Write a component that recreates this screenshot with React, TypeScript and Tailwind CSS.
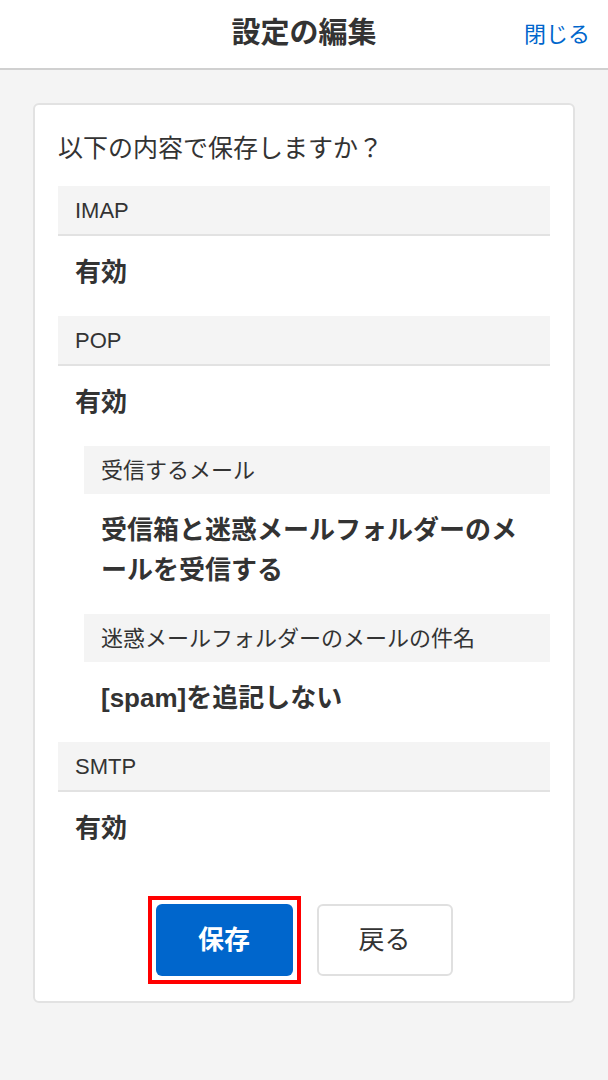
import React from "react";

const font = { fontFamily: '"Liberation Sans", "Noto Sans CJK JP", sans-serif' };

const SectionHeader = ({ label }: { label: string }) => (
  <div className="flex h-[50px] items-center border-b-2 border-[#e2e2e2] bg-[#f4f4f4] pl-[17px] text-[22px] text-[#333]">
    {label}
  </div>
);

const SubHeader = ({ label }: { label: string }) => (
  <div className="flex h-[48px] items-center bg-[#f4f4f4] pl-[17px] text-[22px] text-[#333]">
    {label}
  </div>
);

const Value = ({ children }: { children: React.ReactNode }) => (
  <div className="pb-6 pl-[17px] pr-[17px] pt-4 text-[26px] font-bold leading-[40px] text-[#333]">
    {children}
  </div>
);

export default function App() {
  return (
    <div className="min-h-[1080px] bg-[#f4f4f4]" style={font}>
      <header className="relative flex h-[70px] items-center justify-center border-b-2 border-[#d0d0d0] bg-white">
        <h1 className="text-[29px] font-bold text-[#333]">設定の編集</h1>
        <button className="absolute right-[18px] top-1/2 -translate-y-1/2 text-[22px] text-[#0066cc]">
          閉じる
        </button>
      </header>

      <main className="px-[33px] pt-[33px]">
        <div className="rounded-md border-2 border-[#e2e2e2] bg-white px-[23px] pb-[25px] pt-[25px]">
          <p className="mb-5 text-[25px] leading-[36px] text-[#333]">以下の内容で保存しますか？</p>

          <SectionHeader label="IMAP" />
          <Value>有効</Value>

          <SectionHeader label="POP" />
          <Value>有効</Value>

          <div className="ml-[26px]">
            <SubHeader label="受信するメール" />
            <Value>受信箱と迷惑メールフォルダーのメールを受信する</Value>
            <SubHeader label="迷惑メールフォルダーのメールの件名" />
            <Value>[spam]を追記しない</Value>
          </div>

          <SectionHeader label="SMTP" />
          <Value>有効</Value>

          <div className="mt-8 flex justify-center gap-6">
            {/* highlight box around the save button */}
            <div className="flex outline-4 outline-offset-4 outline-[#ff0000]">
              <button className="h-[72px] w-[137px] rounded-md bg-[#0066cc] text-[26px] font-bold text-white">
                保存
              </button>
            </div>
            <button className="h-[72px] w-[136px] rounded-md border-2 border-[#e0e0e0] bg-white text-[26px] text-[#333]">
              戻る
            </button>
          </div>
        </div>
      </main>
    </div>
  );
}
